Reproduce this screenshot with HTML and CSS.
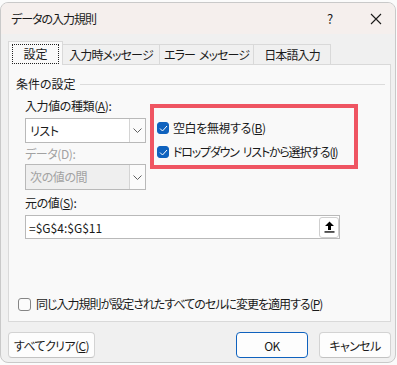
FILE: index.html
```html
<!DOCTYPE html>
<html lang="ja">
<head>
    <meta charset="UTF-8">
    <title>データの入力規則</title>
    <link rel="stylesheet" href="styles.css">
</head>
<body>
    <div class="window">
        <div class="titlebar">
            <span class="title">データの入力規則</span>
            <span class="help">?</span>
            <span class="close">
                <svg width="12" height="12" viewBox="0 0 12 12"><path d="M1 1L11 11M11 1L1 11" stroke="#1a1a1a" stroke-width="1.1"/></svg>
            </span>
        </div>
        <div class="dialog-body">
            <div class="tabs">
                <div class="tab active"><span class="focus">設定</span></div>
                <div class="tab">入力時メッセージ</div>
                <div class="tab">エラー<span class="sp"> </span>メッセージ</div>
                <div class="tab">日本語入力</div>
            </div>
            <div class="panel">
                <div class="group-title"><span>条件の設定</span><span class="rule"></span></div>
                <div class="cond">
                    <div class="cond-left">
                        <div class="field-label">入力値の種類(<u>A</u>):</div>
                        <div class="select">
                            <span class="select-text">リスト</span>
                            <span class="drop">
                                <svg width="9" height="5" viewBox="0 0 9 5"><path d="M0.5 0.5L4.5 4.5L8.5 0.5" fill="none" stroke="#606060" stroke-width="1"/></svg>
                            </span>
                        </div>
                        <div class="field-label disabled">データ(D):</div>
                        <div class="select disabled">
                            <span class="select-text">次の値の間</span>
                            <span class="drop">
                                <svg width="9" height="5" viewBox="0 0 9 5"><path d="M0.5 0.5L4.5 4.5L8.5 0.5" fill="none" stroke="#606060" stroke-width="1"/></svg>
                            </span>
                        </div>
                    </div>
                    <div class="highlight">
                        <div class="check-row">
                            <span class="checkbox checked">
                                <svg width="9" height="7" viewBox="0 0 9 7"><path d="M1 3.5L3.5 6L8 1" fill="none" stroke="#fff" stroke-width="1"/></svg>
                            </span>
                            <span>空白を無視する(<u>B</u>)</span>
                        </div>
                        <div class="check-row kana">
                            <span class="checkbox checked">
                                <svg width="9" height="7" viewBox="0 0 9 7"><path d="M1 3.5L3.5 6L8 1" fill="none" stroke="#fff" stroke-width="1"/></svg>
                            </span>
                            <span>ドロップダウン<span class="sp"> </span>リストから選択する(<u>I</u>)</span>
                        </div>
                    </div>
                </div>
                <div class="field-label source-label">元の値(<u>S</u>):</div>
                <div class="source-input">
                    <span class="source-text">=$G$4:$G$11</span>
                    <span class="ref-btn">
                        <svg width="11" height="12" viewBox="0 0 11 12"><path d="M5.5 0.5L10 5H7V9H4V5H1Z" fill="#000"/><rect x="0.5" y="10.3" width="10" height="1.3" fill="#000"/></svg>
                    </span>
                </div>
                <div class="apply-row">
                    <span class="checkbox"></span>
                    <span>同じ入力規則が設定されたすべてのセルに変更を適用する(<u>P</u>)</span>
                </div>
            </div>
            <div class="buttons">
                <button class="btn">すべてクリア(<u>C</u>)</button>
                <span class="spacer"></span>
                <button class="btn btn-ok">OK</button>
                <button class="btn">キャンセル</button>
            </div>
        </div>
    </div>
</body>
</html>
```

FILE: styles.css
```css
body {
    margin: 0;
    background-color: #fbfbfb;
    font-family: "Noto Sans CJK JP", "Noto Sans", sans-serif;
    font-size: 12px;
    font-feature-settings: "palt";
    letter-spacing: -0.4px;
    color: #1a1a1a;
}
.sp {
    display: inline-block;
    width: 4px;
}
.window {
    margin-top: 2px;
    width: 396px;
    height: 361px;
    box-sizing: border-box;
    border: 1px solid #c9c9c9;
    border-radius: 8px;
    background-color: #f0f0f0;
    overflow: hidden;
}
.titlebar {
    height: 31px;
    background-color: #f5efed;
    display: flex;
    align-items: center;
    padding-left: 10px;
}
.title {
    flex: 1;
    line-height: 16px;
    letter-spacing: -1px;
}
.help {
    width: 20px;
    text-align: center;
    margin-right: 26px;
    font-size: 13px;
}
.close {
    width: 20px;
    display: flex;
    justify-content: center;
    margin-right: 9px;
}
.dialog-body {
    padding: 7px 4px 0 7px;
}
.tabs {
    display: flex;
    align-items: flex-end;
    height: 23px;
    position: relative;
    z-index: 1;
}
.tab {
    height: 20px;
    box-sizing: border-box;
    border: 1px solid #d9d9d9;
    border-bottom: none;
    margin-left: -1px;
    padding: 0;
    text-align: center;
    line-height: 19px;
    white-space: nowrap;
    letter-spacing: -0.9px;
}
.tab:nth-child(2) { width: 98px; }
.tab:nth-child(3) { width: 95px; }
.tab:nth-child(4) { width: 78px; }
.tab.active {
    margin-left: 0;
    width: 55px;
    height: 24px;
    margin-bottom: -1px;
    background-color: #f9f9f9;
    padding: 2px 3px 0 3px;
    letter-spacing: 0;
}
.focus {
    display: block;
    height: 18px;
    border: 1px dotted #222;
    text-align: center;
    line-height: 17px;
}
.panel {
    height: 258px;
    box-sizing: border-box;
    border: 1px solid #d9d9d9;
    background-color: #f9f9f9;
    padding: 11px 5px 0 7px;
}
.group-title {
    display: flex;
    align-items: center;
    line-height: 16px;
    letter-spacing: 0;
}
.rule {
    flex: 1;
    height: 1px;
    background-color: #dcdcdc;
    margin-left: 4px;
}
.cond {
    display: flex;
    align-items: flex-start;
    margin-top: 6px;
    padding-left: 9px;
}
.cond-left {
    width: 121px;
}
.field-label {
    line-height: 16px;
}
.field-label.disabled {
    color: #a2a2a2;
    margin-top: 3px;
}
.select {
    margin-top: 4px;
    height: 25px;
    box-sizing: border-box;
    border: 1px solid #b9b9b9;
    background-color: #fff;
    display: flex;
    align-items: stretch;
}
.select.disabled {
    margin-top: 2px;
    height: 26px;
    background-color: #efefef;
    color: #a2a2a2;
}
.select-text {
    flex: 1;
    padding-left: 4px;
    line-height: 23px;
}
.drop {
    width: 16px;
    box-sizing: border-box;
    border-left: 1px solid #d4d4d4;
    background-color: #fbfbfb;
    display: flex;
    align-items: center;
    justify-content: center;
}
.highlight {
    margin: 6px 0 0 4px;
    width: 208px;
    height: 65px;
    box-sizing: border-box;
    border: 4px solid #ef5562;
    padding: 12px 0 0 3px;
}
.check-row {
    display: flex;
    align-items: center;
    line-height: 16px;
    white-space: nowrap;
    margin-bottom: 8px;
}
.check-row.kana {
    letter-spacing: -1.2px;
}
.checkbox {
    width: 12px;
    height: 12px;
    box-sizing: border-box;
    border: 1px solid #858585;
    border-radius: 3px;
    background-color: #fbfbfb;
    margin-right: 4px;
    display: flex;
    align-items: center;
    justify-content: center;
    flex-shrink: 0;
}
.checkbox.checked {
    background-color: #0f62be;
    border-color: #0f62be;
}
.source-label {
    margin: 5px 0 0 9px;
}
.source-input {
    margin: 4px 0 0 9px;
    width: 315px;
    height: 24px;
    box-sizing: border-box;
    border: 1px solid #b9b9b9;
    background-color: #fff;
    display: flex;
    align-items: center;
    letter-spacing: 0;
}
.source-text {
    flex: 1;
    padding-left: 3px;
}
.ref-btn {
    width: 20px;
    height: 21px;
    box-sizing: border-box;
    border: 1px solid #cfcfcf;
    border-radius: 3px;
    background-color: #fff;
    display: flex;
    align-items: center;
    justify-content: center;
}
.apply-row {
    display: flex;
    align-items: center;
    margin: 57px 0 0 2px;
    line-height: 16px;
    white-space: nowrap;
    letter-spacing: -1px;
}
.apply-row .checkbox {
    width: 13px;
    height: 13px;
    margin-right: 5px;
}
.buttons {
    display: flex;
    margin-top: 10px;
}
.spacer {
    flex: 1;
}
.btn {
    height: 26px;
    box-sizing: border-box;
    border: 1px solid #d3d3d3;
    border-bottom-color: #c2c2c2;
    border-radius: 4px;
    background-color: #fdfdfd;
    font-family: inherit;
    font-size: 12px;
    font-feature-settings: "palt";
    letter-spacing: -0.6px;
    color: #1a1a1a;
    padding: 0;
    width: 72px;
}
.btn:first-child {
    width: 87px;
}
.btn-ok {
    border: 1px solid #0f62be;
    margin-right: 11px;
}
```
